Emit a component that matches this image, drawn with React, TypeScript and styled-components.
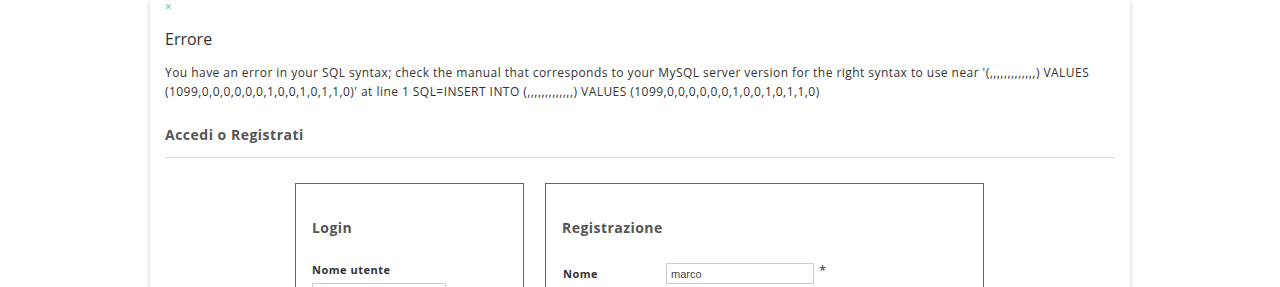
import React from 'react';
import styled, { createGlobalStyle } from 'styled-components';

const GlobalStyle = createGlobalStyle`
  body {
    margin: 0;
    background: #ffffff;
    font-family: "Open Sans", "Liberation Sans", sans-serif;
    color: #333333;
  }
`;

const Page = styled.div`
  width: 980px;
  margin: 0 auto;
  padding: 0 15px 40px;
  box-sizing: border-box;
  background: #ffffff;
  box-shadow: 0 0 6px rgba(0, 0, 0, 0.18);
  min-height: 287px;
`;

const CloseButton = styled.span`
  display: block;
  color: #6cbf6c;
  font-size: 12px;
  line-height: 13px;
  height: 13px;
  cursor: pointer;
`;

const AlertTitle = styled.h4`
  margin: 16px 0 0;
  font-size: 16px;
  font-weight: 400;
  line-height: 20px;
  color: #333333;
`;

const AlertMessage = styled.p`
  margin: 14px 0 0;
  font-size: 12px;
  letter-spacing: 0.45px;
  line-height: 19px;
  color: #333333;
`;

const SectionTitle = styled.h3`
  margin: 24px 0 0;
  padding-bottom: 12px;
  font-size: 14px;
  font-weight: 700;
  letter-spacing: 0.5px;
  line-height: 20px;
  color: #555555;
  border-bottom: 1px solid #dddddd;
`;

const Boxes = styled.div`
  display: flex;
  justify-content: center;
  gap: 21px;
  margin-top: 25px;
  padding-right: 1px;
`;

const Box = styled.div<{ $width: number }>`
  width: ${(p) => p.$width}px;
  box-sizing: border-box;
  border: 1px solid #666666;
  padding: 34px 16px 20px;
  height: 200px;
`;

const BoxTitle = styled.h3`
  margin: 0;
  font-size: 14px;
  font-weight: 700;
  letter-spacing: 0.45px;
  line-height: 20px;
  color: #555555;
`;

const StackLabel = styled.label`
  display: block;
  margin-top: 25px;
  font-size: 11px;
  font-weight: 700;
  letter-spacing: 0.5px;
  line-height: 14px;
  color: #333333;
`;

const TextInput = styled.input<{ $width: number }>`
  width: ${(p) => p.$width}px;
  height: 21px;
  box-sizing: border-box;
  border: 1px solid #cccccc;
  padding: 2px 4px;
  font-family: "Liberation Sans", Arial, sans-serif;
  font-size: 11px;
  color: #444444;
  outline: none;
`;

const StackInput = styled(TextInput)`
  display: block;
  margin-top: 6px;
`;

const FormRow = styled.div`
  display: flex;
  align-items: center;
  margin-top: 25px;
`;

const RowLabel = styled.label`
  width: 103px;
  padding-left: 1px;
  font-size: 11px;
  font-weight: 700;
  letter-spacing: 0.5px;
  color: #333333;
`;

const Required = styled.span`
  margin-left: 5px;
  align-self: flex-start;
  font-size: 13px;
  line-height: 14px;
  color: #333333;
`;

export default function App() {
  return (
    <>
      <GlobalStyle />
      <Page>
        <CloseButton>×</CloseButton>
        <AlertTitle>Errore</AlertTitle>
        <AlertMessage>
          You have an error in your SQL syntax; check the manual that corresponds to your MySQL server
          version for the right syntax to use near '(,,,,,,,,,,,,,) VALUES (1099,0,0,0,0,0,0,1,0,0,1,0,1,1,0)' at
          line 1 SQL=INSERT INTO (,,,,,,,,,,,,,) VALUES (1099,0,0,0,0,0,0,1,0,0,1,0,1,1,0)
        </AlertMessage>
        <SectionTitle>Accedi o Registrati</SectionTitle>
        <Boxes>
          <Box $width={229}>
            <BoxTitle>Login</BoxTitle>
            <StackLabel>Nome utente</StackLabel>
            <StackInput $width={134} type="text" />
          </Box>
          <Box $width={439}>
            <BoxTitle>Registrazione</BoxTitle>
            <FormRow>
              <RowLabel>Nome</RowLabel>
              <TextInput $width={148} type="text" defaultValue="marco" />
              <Required>*</Required>
            </FormRow>
          </Box>
        </Boxes>
      </Page>
    </>
  );
}
